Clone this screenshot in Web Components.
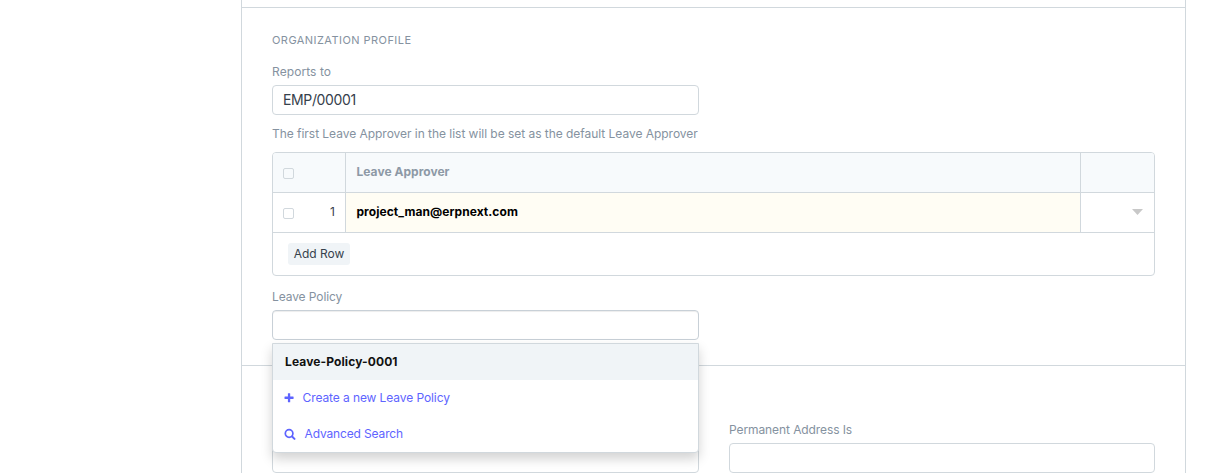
<!DOCTYPE html>
<html lang="en">
<head>
<meta charset="utf-8">
<title>Employee</title>
<style>
html,body{margin:0;height:473px;overflow:hidden;background:#fff}
body{font-family:Inter,"Liberation Sans",sans-serif;font-size:12px;color:#36414c}
</style>
</head>
<body>
<employee-form></employee-form>
<script>
const define = (name, html) => {
  const t = document.createElement('template');
  t.innerHTML = html;
  customElements.define(name, class extends HTMLElement {
    constructor(){
      super();
      this.attachShadow({mode:'open'}).append(t.content.cloneNode(true));
    }
  });
};

define('form-section', `<style>
:host{display:block;box-sizing:border-box;padding:0 30px;border-bottom:1px solid #d1d8dd}
</style><slot></slot>`);

define('section-head', `<style>
:host{display:block;font-size:11px;line-height:16px;letter-spacing:.45px;text-transform:uppercase;color:#8592a0}
</style><slot></slot>`);

define('form-field', `<style>
:host{display:block;width:427px;position:relative}
.label{line-height:16px;height:21px;color:#8592a0;white-space:nowrap;letter-spacing:var(--label-spacing,0)}
.box{box-sizing:border-box;height:30px;border:1px solid #d1d8dd;border-radius:4px;padding:0 10px;font-size:14px;line-height:28px;color:#36414c;background:#fff;letter-spacing:-.37px}
:host([focused]) .box{border-color:#c8d0d7;box-shadow:inset 0 1px 1px rgba(0,0,0,.075)}
</style><div class="label"><slot name="label"></slot></div><div class="box"><slot></slot></div><slot name="menu"></slot>`);

define('check-box', `<style>
:host{display:block;box-sizing:border-box;width:11px;height:11px;border:1px solid #d1d8dd;border-radius:2px;background:transparent}
</style>`);

define('approver-grid', `<style>
:host{display:block;box-sizing:border-box;height:124px;border:1px solid #d1d8dd;border-radius:4px;overflow:hidden}
.row{display:grid;grid-template-columns:72px 735px 1fr;height:39px;border-bottom:1px solid #d1d8dd;line-height:38px}
.head{background:#f7fafc;color:#8d99a6;font-weight:700}
.row>div+div{border-left:1px solid #d1d8dd}
.idx{display:flex;justify-content:space-between;padding:0 10px}
check-box{margin-top:15px}
.txt{padding-left:10.5px}
.body .txt{background:#fffdf4;color:#000;font-weight:700;letter-spacing:.06px}
.head .txt{letter-spacing:.03px}
.more{display:flex;justify-content:flex-end;padding:16px 11px 0 0}
.more svg{display:block}
.foot{padding:10px 15px}
.btn{display:inline-block;box-sizing:border-box;height:22px;line-height:21px;width:62px;text-align:center;border-radius:3px;background:#f0f4f7;color:#36414c;letter-spacing:-.05px}
</style>
<div class="row head"><div class="idx"><check-box></check-box></div><div class="txt"><span>Leave Approver</span></div><div></div></div>
<div class="row body"><div class="idx"><check-box></check-box><span>1</span></div><div class="txt"><span>project_man@erpnext.com</span></div><div class="more"><svg width="11" height="6" viewBox="0 0 11 6"><path d="M0 0h11L5.5 6z" fill="#c8c8c8"/></svg></div></div>
<div class="foot"><span class="btn">Add Row</span></div>`);

define('menu-item', `<style>
:host{display:flex;align-items:center;box-sizing:border-box;height:36px;padding:0 11px;color:#5e64ff;line-height:36px;white-space:nowrap;letter-spacing:-.09px}
:host([active]){padding:0 12px;background:#f0f4f7;color:#111;font-weight:700;letter-spacing:.11px}
::slotted(svg){display:block;flex:none}
</style><slot></slot>`);

define('link-menu', `<style>
:host{display:block;position:absolute;z-index:2;left:0;top:54px;width:427px;height:110px;box-sizing:border-box;border:1px solid #d1d8dd;border-radius:0 0 4px 4px;background:#fff;box-shadow:0 6px 12px rgba(0,0,0,.175);overflow:hidden}
</style><slot></slot>`);

define('employee-form', `<style>
:host{display:block;box-sizing:border-box;width:945px;height:473px;margin-left:241px;border:solid #d1d8dd;border-width:0 1px;overflow:hidden}
form-section:nth-of-type(1){height:8px}
form-section:nth-of-type(2){height:358px;padding-top:24px}
form-section:nth-of-type(3){height:150px;padding-top:56px;border:0}
section-head{margin-bottom:16px}
.note{line-height:16px;margin:11px 0 10px;color:#8592a0;white-space:nowrap;letter-spacing:-.035px}
approver-grid{margin-bottom:13px}
.reports{--label-spacing:.08px}
.policy,.address{--label-spacing:-.09px}
.cols{display:grid;grid-template-columns:427px 426px;column-gap:30px}
.cols form-field{width:auto}
.plus,.find{margin-right:8.5px}
.search{letter-spacing:-.14px}
</style>
<form-section></form-section>
<form-section>
<section-head>Organization Profile</section-head>
<form-field class="reports"><span slot="label">Reports to</span>EMP/00001</form-field>
<div class="note">The first Leave Approver in the list will be set as the default Leave Approver</div>
<approver-grid></approver-grid>
<form-field class="policy" focused><span slot="label">Leave Policy</span>
<link-menu slot="menu">
<menu-item active><span>Leave-Policy-0001</span></menu-item>
<menu-item><svg class="plus" width="10" height="10" viewBox="0 0 10 10"><path d="M3.9 .6q0-.4.4-.4h1.5q.4 0 .4.4v3h3q.4 0 .4.4v1.5q0 .4-.4.4h-3v3q0 .4-.4.4H4.3q-.4 0-.4-.4v-3h-3q-.4 0-.4-.4V4q0-.4.4-.4h3z" fill="#5e64ff"/></svg><span>Create a new Leave Policy</span></menu-item>
<menu-item><svg class="find" width="12" height="12" viewBox="0 0 12 12" fill="none" stroke="#5e64ff"><circle cx="5.1" cy="5.5" r="3.8" stroke-width="1.7"/><path d="M8.1 8.5l2.4 2.4" stroke-width="2" stroke-linecap="round"/></svg><span class="search">Advanced Search</span></menu-item>
</link-menu></form-field>
</form-section>
<form-section><div class="cols">
<form-field></form-field>
<form-field class="address"><span slot="label">Permanent Address Is</span></form-field>
</div></form-section>`);
</script>
</body>
</html>
